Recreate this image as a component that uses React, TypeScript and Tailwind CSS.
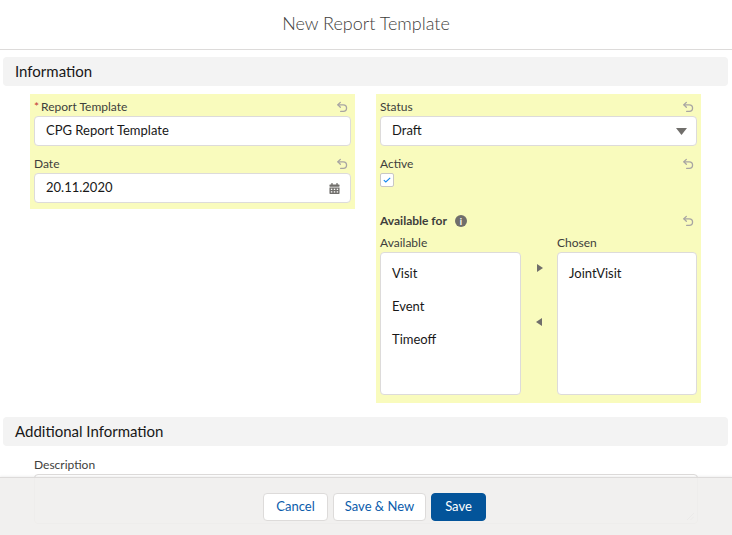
import React from 'react';

const font = { fontFamily: 'Lato, "Open Sans", Arial, sans-serif' };

const UndoIcon: React.FC = () => (
  <svg width="13" height="13" viewBox="0 0 24 24" fill="none" stroke="#a8a5a3" strokeWidth="2.4" strokeLinecap="round" strokeLinejoin="round">
    <path d="M8 2.5 3.5 7 8 11.5" />
    <path d="M3.5 7h10a6 6 0 0 1 0 12H8.5" />
  </svg>
);

const CalendarIcon: React.FC = () => (
  <svg width="11" height="11" viewBox="0 0 12 12" fill="#706e6b">
    <rect x="2.5" y="0" width="1.5" height="2.5" rx="0.5" />
    <rect x="8" y="0" width="1.5" height="2.5" rx="0.5" />
    <rect x="0.5" y="1.5" width="11" height="2.5" rx="0.6" />
    <path d="M0.5 5h11v6.2a0.8 0.8 0 0 1-0.8 0.8H1.3a0.8 0.8 0 0 1-0.8-0.8z" />
    <g fill="#ffffff">
      <rect x="2" y="6.2" width="1.6" height="1.4" />
      <rect x="5.2" y="6.2" width="1.6" height="1.4" />
      <rect x="8.4" y="6.2" width="1.6" height="1.4" />
      <rect x="2" y="9" width="1.6" height="1.4" />
      <rect x="5.2" y="9" width="1.6" height="1.4" />
      <rect x="8.4" y="9" width="1.6" height="1.4" />
    </g>
  </svg>
);

const FieldLabel: React.FC<{ children: React.ReactNode; required?: boolean; bold?: boolean; info?: boolean }> = ({ children, required, bold, info }) => (
  <div className="flex h-[18px] items-center justify-between">
    <div className={`flex items-center text-[12px] text-[#3e3e3c] ${bold ? 'font-bold' : ''}`}>
      {required && <span className="mr-[2px] text-[#c23934]">*</span>}
      {children}
      {info && (
        <span className="ml-[8px] flex h-[12px] w-[12px] items-center justify-center rounded-full bg-[#706e6b] text-[9px] font-bold leading-none text-white">
          i
        </span>
      )}
    </div>
    <span className="mr-[2px] flex items-center">
      <UndoIcon />
    </span>
  </div>
);

const TextInput: React.FC<{ value: string; right?: React.ReactNode }> = ({ value, right }) => (
  <div className="flex h-[30px] items-center justify-between rounded-[4px] border border-[#dddbda] bg-white pl-[11px] pr-[10px] text-[13px] text-[#181818]">
    <span>{value}</span>
    {right}
  </div>
);

const SectionHeader: React.FC<{ title: string }> = ({ title }) => (
  <div className="ml-[3px] mr-[4px] flex h-[29px] items-center rounded-[4px] bg-[#f3f3f3] px-[12px] text-[15px] text-[#181818]">
    {title}
  </div>
);

const ListBox: React.FC<{ items: string[] }> = ({ items }) => (
  <div className="flex h-[143px] flex-col gap-[17px] rounded-[4px] border border-[#dddbda] bg-white px-[11px] pt-[12px] text-[13px] text-[#181818]">
    {items.map((it) => (
      <div key={it} className="h-[16px] leading-[16px]">
        {it}
      </div>
    ))}
  </div>
);

const App: React.FC = () => {
  return (
    <div className="relative h-[535px] w-[732px] overflow-hidden bg-white" style={font}>
      {/* Title */}
      <div className="flex h-[50px] items-start justify-center border-b border-[#dddbda] pt-[10px] text-[18px] font-light text-[#3e3e3c]">
        New Report Template
      </div>

      <div className="pt-[7px]">
        <SectionHeader title="Information" />

        <div className="mt-[8px] grid grid-cols-[325px_325px] gap-x-[21px] pl-[30px]">
          {/* Left column */}
          <div className="self-start bg-[#f9fbbd] px-[4px] pb-[6px] pt-[4px]">
            <FieldLabel required>Report Template</FieldLabel>
            <TextInput value="CPG Report Template" />
            <div className="mt-[9px]">
              <FieldLabel>Date</FieldLabel>
              <TextInput value="20.11.2020" right={<CalendarIcon />} />
            </div>
          </div>

          {/* Right column */}
          <div className="bg-[#f9fbbd] px-[4px] pb-[8px] pt-[4px]">
            <FieldLabel>Status</FieldLabel>
            <TextInput
              value="Draft"
              right={
                <svg width="11" height="7" viewBox="0 0 11 7" className="mr-[-1px]">
                  <path d="M0 0h11L5.5 7z" fill="#706e6b" />
                </svg>
              }
            />
            <div className="mt-[9px]">
              <FieldLabel>Active</FieldLabel>
              <div className="flex h-[14px] w-[14px] items-center justify-center rounded-[2px] border border-[#c9c7c5] bg-white">
                <svg width="8" height="6" viewBox="0 0 8 6" fill="none" stroke="#1589ee" strokeWidth="1.1">
                  <path d="M0.8 3.2 2.8 5 7.2 0.8" />
                </svg>
              </div>
            </div>
            <div className="mt-[25px]">
              <FieldLabel bold info>
                Available for
              </FieldLabel>
              <div className="mt-[3px] flex">
                <div className="w-[141px]">
                  <div className="h-[19px] text-[12px] leading-[19px] text-[#3e3e3c]">Available</div>
                  <ListBox items={['Visit', 'Event', 'Timeoff']} />
                </div>
                <div className="flex w-[36px] flex-col items-center pt-[31px]">
                  <svg width="6" height="8" viewBox="0 0 6 8" className="mr-[-1px]">
                    <path d="M0 0l6 4-6 4z" fill="#706e6b" />
                  </svg>
                  <svg width="6" height="8" viewBox="0 0 6 8" className="mt-[46px] ml-[-1px]">
                    <path d="M6 0 0 4l6 4z" fill="#706e6b" />
                  </svg>
                </div>
                <div className="w-[140px]">
                  <div className="h-[19px] text-[12px] leading-[19px] text-[#3e3e3c]">Chosen</div>
                  <ListBox items={['JointVisit']} />
                </div>
              </div>
            </div>
          </div>
        </div>

        <div className="mt-[14px]">
          <SectionHeader title="Additional Information" />
        </div>

        <div className="px-[34px] pt-[10px]">
          <div className="h-[18px] text-[12px] leading-[18px] text-[#3e3e3c]">Description</div>
          <div className="relative h-[50px] w-[664px] rounded-[4px] border border-[#dddbda] bg-white">
            <svg width="8" height="8" viewBox="0 0 8 8" className="absolute bottom-[3px] right-[3px]" stroke="#b0adab" strokeWidth="0.8">
              <path d="M1 8 8 1M4.5 8 8 4.5" />
            </svg>
          </div>
        </div>
      </div>

      {/* Footer overlay */}
      <div className="absolute bottom-0 left-0 right-0 flex h-[58px] items-center justify-center border-t border-[#dddbda] bg-[#efeeed]/90 pl-[17px] shadow-[0_-1px_2px_rgba(0,0,0,0.06)]">
        <div className="flex gap-[5px] text-[13px]">
          <button className="h-[28px] w-[65px] rounded-[4px] border border-[#dddbda] bg-white text-[#0b5cab]">Cancel</button>
          <button className="h-[28px] w-[93px] rounded-[4px] border border-[#dddbda] bg-white text-[#0b5cab]">Save &amp; New</button>
          <button className="h-[28px] w-[55px] rounded-[4px] border border-[#03549a] bg-[#03549a] text-white">Save</button>
        </div>
      </div>
    </div>
  );
};

export default App;
